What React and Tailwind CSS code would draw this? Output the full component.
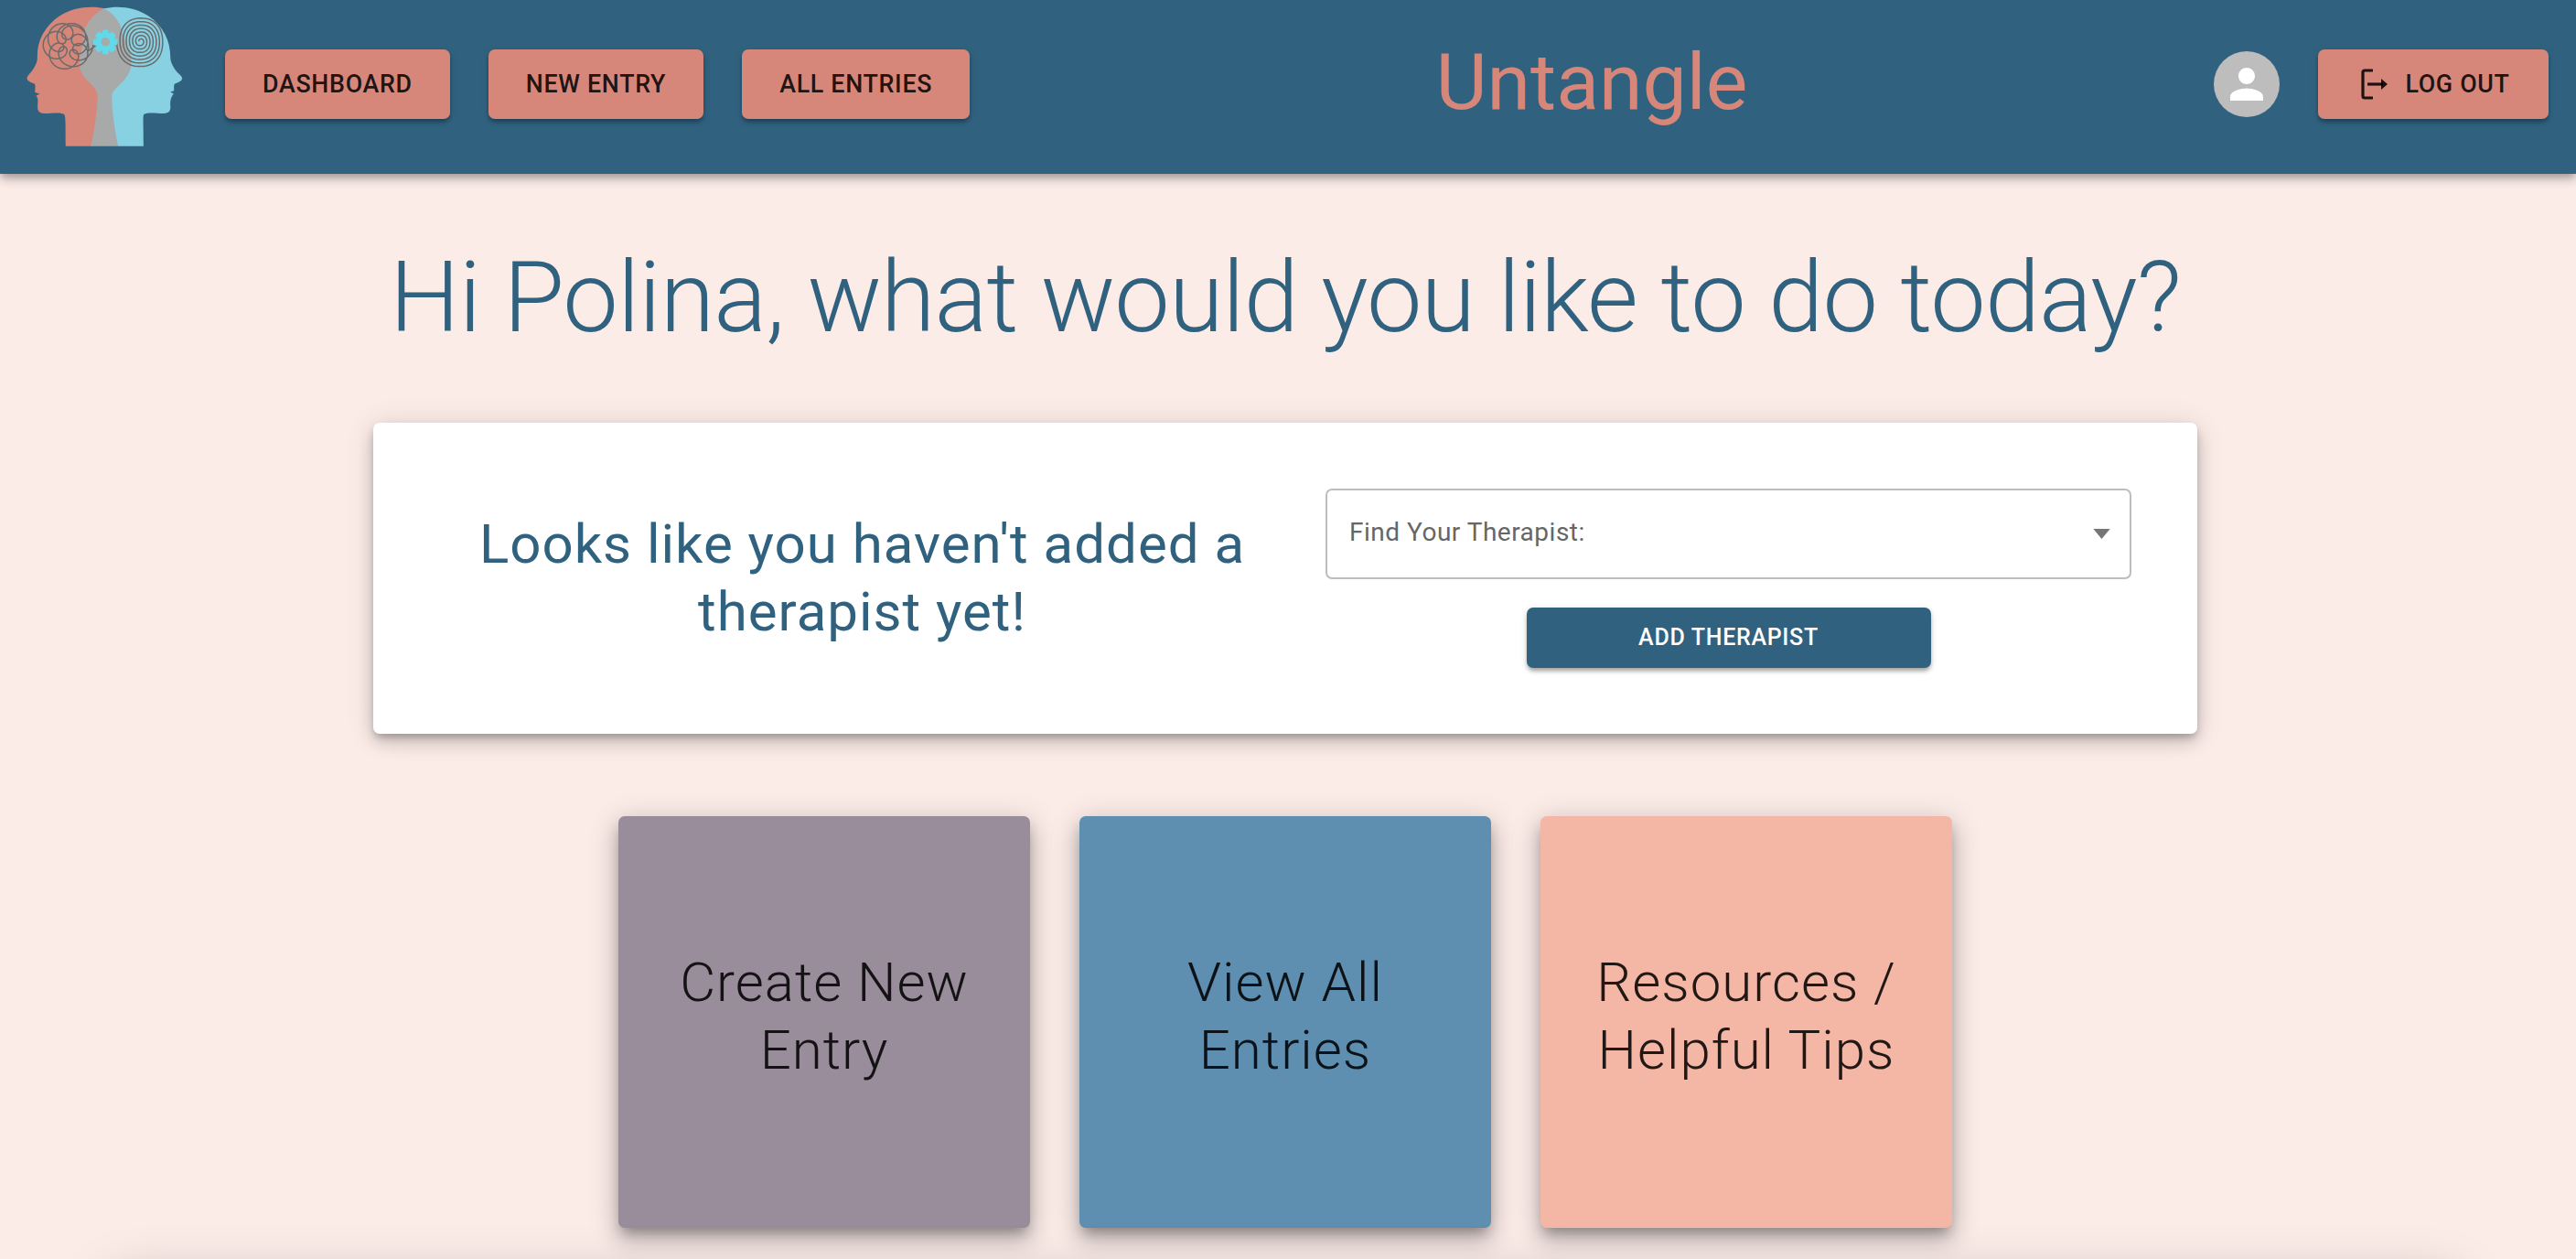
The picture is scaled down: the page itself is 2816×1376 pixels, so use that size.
import React from 'react'

// rounded spiral for the right half of the logo
function spiralPath() {
  const pts = []
  const steps = 420
  const turns = 7
  for (let i = 0; i <= steps; i++) {
    const t = i / steps
    const a = t * turns * Math.PI * 2 + Math.PI
    const rx = 5 + t * 73
    const ry = 5 + t * 80
    const c = Math.cos(a)
    const s = Math.sin(a)
    const k = 0.88
    const x = 460 + rx * Math.sign(c) * Math.pow(Math.abs(c), k)
    const y = 136 + ry * Math.sign(s) * Math.pow(Math.abs(s), k)
    pts.push(`${x.toFixed(1)} ${y.toFixed(1)}`)
  }
  return 'M' + pts.join('L')
}

// tangled scribble for the left half, ends in a tail towards the gear
function scribblePath() {
  const pts = []
  const steps = 600
  const end = 13
  for (let i = 0; i <= steps; i++) {
    const t = (i / steps) * end
    const x = 222 + 46 * Math.cos(t) + 6 * Math.cos(1.7 * t) + 30 * Math.cos(4.37 * t)
    const y = 147 + 46 * Math.sin(t) + 6 * Math.sin(1.3 * t) + 30 * Math.sin(4.37 * t)
    pts.push(`${x.toFixed(1)} ${y.toFixed(1)}`)
  }
  return 'M' + pts.join('L') + 'L312 150'
}

function Logo() {
  const teeth = [0, 45, 90, 135, 180, 225, 270, 315]
  return (
    <svg viewBox="80 15 525 475" className="w-[175px] h-[158px] shrink-0 mb-[16px]">
      <path fill="#d6877a" d="M345 28C300 18 240 22 195 52C145 85 120 135 121 185C122 200 118 210 108 226C98 242 87 248 87 258C88 268 105 272 112 276C116 282 113 292 113 303L129 309L117 314C124 322 123 332 122 345C121 362 124 372 145 373C165 373 195 368 208 375C214 380 214 395 214 480L300 480L345 300Z" />
      <path fill="#88d1e3" d="M340 28C385 18 440 22 485 52C535 85 558 135 558 185C558 200 562 210 572 226C582 242 597 248 597 258C596 268 579 272 572 276C568 282 571 292 570 298L558 302L569 308C560 318 557 332 558 345C560 362 556 372 535 373C515 373 485 368 472 375C467 380 470 395 470 480L385 480L345 300Z" />
      <path fill="#a8aaaa" d="M341 28C300 48 274 85 272 120C270 160 255 195 262 228C270 262 315 280 319 312C318 360 310 420 297 480L386 480C375 420 365 360 366 312C372 285 425 265 430 212C433 170 412 150 400 105C392 70 372 45 341 28Z" />
      <g fill="none" stroke="#6b6b6b" strokeWidth="4.5">
        <path d={scribblePath()} />
        <path d={spiralPath()} />
      </g>
      <g fill="#62d9e8">
        <circle cx="345" cy="138" r="31" />
        {teeth.map(r => (
          <rect key={r} x="335" y="98" width="20" height="20" rx="5" transform={`rotate(${r} 345 138)`} />
        ))}
      </g>
      <circle cx="345" cy="138" r="14" fill="#a8aaaa" />
    </svg>
  )
}

function NavButton({ children }) {
  return (
    <button className="h-[76px] px-[41px] rounded-[7px] bg-[#d6877a] text-[rgba(0,0,0,0.87)] text-[26.8px] font-medium tracking-[0.7px] uppercase shadow-[0_5px_5px_-2px_rgba(0,0,0,0.2),0_3px_4px_0_rgba(0,0,0,0.14),0_2px_9px_0_rgba(0,0,0,0.12)]">
      {children}
    </button>
  )
}

function Tile({ color, line1, line2 }) {
  return (
    <div className={`w-[450px] h-[450px] pb-[13px] rounded-[7px] flex flex-col items-center justify-center text-[60px] leading-[74px] tracking-[1px] font-light text-[rgba(0,0,0,0.87)] shadow-[0_9px_14px_-4px_rgba(0,0,0,0.3),0_14px_24px_2px_rgba(0,0,0,0.14),0_5px_32px_4px_rgba(0,0,0,0.12)] ${color}`}>
      <span>{line1}</span>
      <span>{line2}</span>
    </div>
  )
}

export default function App() {
  return (
    <div className="h-screen overflow-hidden bg-[#fbece8] font-['Roboto',sans-serif]">
      <header className="relative z-10 h-[190px] pb-[6px] bg-[#30627f] flex items-center pl-[27px] pr-[30px] shadow-[0_4px_7px_-2px_rgba(0,0,0,0.2),0_7px_9px_0_rgba(0,0,0,0.14),0_2px_18px_0_rgba(0,0,0,0.12)]">
        <Logo />
        <div className="flex gap-[42px] ml-[44px]">
          <NavButton>Dashboard</NavButton>
          <NavButton>New Entry</NavButton>
          <NavButton>All Entries</NavButton>
        </div>
        <h1 className="flex-1 text-center text-[86px] leading-none text-[#d6877a] -mt-[4px]">Untangle</h1>
        <div className="w-[72px] h-[72px] rounded-full bg-[#bdbdbd] flex items-center justify-center mr-[42px]">
          <svg viewBox="0 0 24 24" className="w-[54px] h-[54px]" fill="#fff">
            <path d="M12 12c2.21 0 4-1.79 4-4s-1.79-4-4-4-4 1.79-4 4 1.79 4 4 4zm0 2c-2.67 0-8 1.34-8 4v2h16v-2c0-2.66-5.33-4-8-4z" />
          </svg>
        </div>
        <button className="h-[76px] w-[252px] rounded-[7px] bg-[#d6877a] text-[rgba(0,0,0,0.87)] text-[26.8px] font-medium tracking-[0.7px] flex items-center justify-center gap-[19px] shadow-[0_5px_5px_-2px_rgba(0,0,0,0.2),0_3px_4px_0_rgba(0,0,0,0.14),0_2px_9px_0_rgba(0,0,0,0.12)]">
          <svg viewBox="0 0 34 36" className="w-[34px] h-[36px]" fill="none" stroke="currentColor" strokeWidth="3.2">
            <path d="M18 3H9a2 2 0 0 0-2 2v26a2 2 0 0 0 2 2h9" />
            <path d="M12 18h17" />
            <path d="M27 12l7 6-7 6z" fill="currentColor" stroke="none" />
          </svg>
          LOG OUT
        </button>
      </header>

      <main className="flex flex-col items-center pr-[6px]">
        <h2 className="mt-[70px] text-[108px] leading-[130px] font-light tracking-[-0.9px] text-[#30627f]">
          Hi Polina, what would you like to do today?
        </h2>

        <section className="mt-[72px] w-[1994px] h-[340px] bg-white rounded-[7px] flex items-center gap-[45px] pl-[73px] pr-[72px] shadow-[0_5px_9px_-2px_rgba(0,0,0,0.25),0_10px_18px_0_rgba(0,0,0,0.14),0_2px_32px_0_rgba(0,0,0,0.12)]">
          <p className="flex-1 text-center text-[60px] leading-[74px] tracking-[1px] text-[#30627f]">
            Looks like you haven't added a<br />therapist yet!
          </p>
          <div className="w-[881px] flex flex-col items-center gap-[31px]">
            <div className="w-full h-[99px] rounded-[7px] border-2 border-[#bdbdbd] flex items-center justify-between pl-[24px] pr-[21px]">
              <span className="text-[28px] tracking-[0.5px] text-[#666666] -mt-[3px]">Find Your Therapist:</span>
              <svg viewBox="0 0 20 12" className="w-[19px] h-[11px]" fill="#757575">
                <path d="M0 0h20L10 12z" />
              </svg>
            </div>
            <button className="w-[442px] h-[66px] rounded-[7px] bg-[#30627f] text-white text-[25px] font-medium tracking-[0.7px] shadow-[0_5px_5px_-2px_rgba(0,0,0,0.2),0_3px_4px_0_rgba(0,0,0,0.14),0_2px_9px_0_rgba(0,0,0,0.12)]">
              ADD THERAPIST
            </button>
          </div>
        </section>

        <section className="mt-[90px] flex gap-[54px]">
          <Tile color="bg-[#9a8d9b]" line1="Create New" line2="Entry" />
          <Tile color="bg-[#5f8fb0]" line1="View All" line2="Entries" />
          <Tile color="bg-[#f4b6a5]" line1="Resources /" line2="Helpful Tips" />
        </section>

        <div className="mt-[60px] w-[2560px] h-[300px] rounded-[7px] bg-[#fbece8] shadow-[0_0_60px_rgba(0,0,0,0.28)]" />
      </main>
    </div>
  )
}
